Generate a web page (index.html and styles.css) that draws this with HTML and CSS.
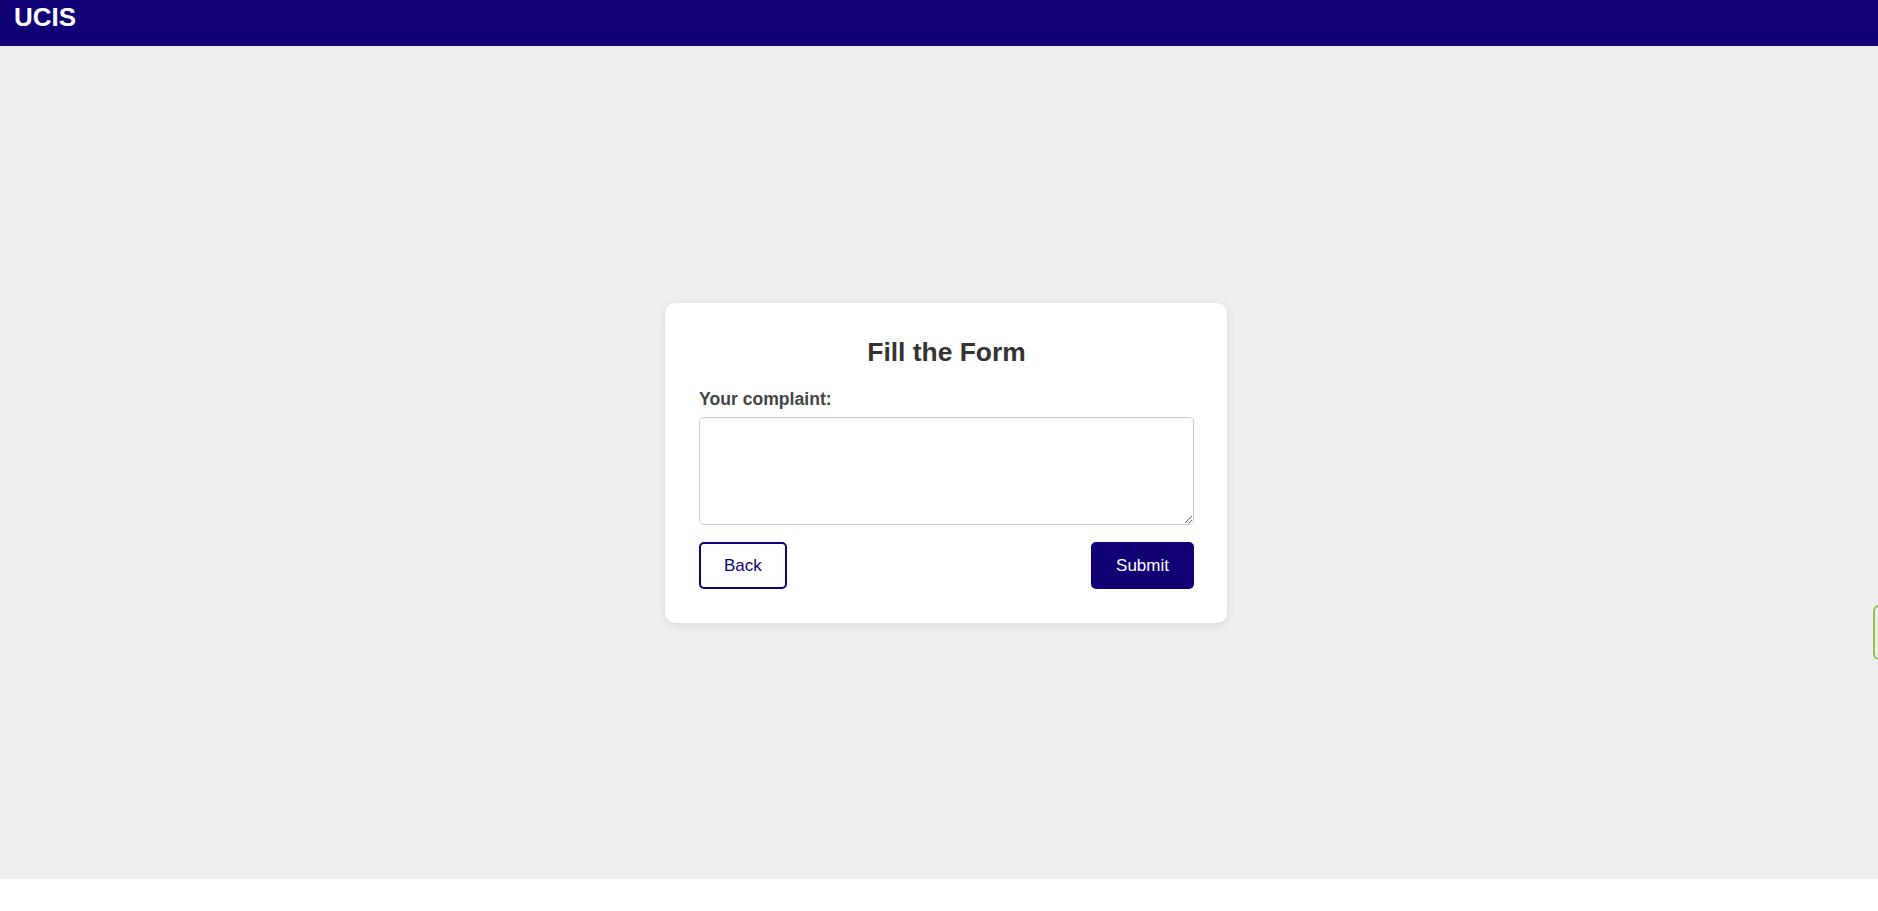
FILE: index.html
```html
<!DOCTYPE html>
<html lang="en">
<head>
<meta charset="utf-8">
<title>UCIS</title>
<link rel="stylesheet" href="styles.css">
</head>
<body>
<header class="topbar">
  <div class="brand">UCIS</div>
</header>
<main class="stage">
  <form class="card">
    <h2 class="card-title">Fill the Form</h2>
    <label class="field-label" for="complaint">Your complaint:</label>
    <textarea id="complaint" class="field-input"></textarea>
    <div class="actions">
      <button type="button" class="btn btn-outline">Back</button>
      <button type="submit" class="btn btn-solid">Submit</button>
    </div>
  </form>
</main>
<div class="side-tab"></div>
</body>
</html>
```
FILE: styles.css
```css
html, body {
  margin: 0;
  padding: 0;
}
body {
  font-family: "Liberation Sans", Arial, sans-serif;
  background: #ffffff;
  overflow-x: hidden;
  position: relative;
  min-height: 911px;
}
.topbar {
  height: 46px;
  background: #110075;
  box-sizing: border-box;
  padding: 2px 14px 0;
}
.brand {
  color: #ffffff;
  font-weight: bold;
  font-size: 26px;
  line-height: 30px;
}
.stage {
  height: 833px;
  background: #efefef;
  display: flex;
  align-items: center;
  justify-content: center;
  padding-left: 14px;
  box-sizing: border-box;
}
.card {
  width: 495px;
  background: #ffffff;
  border-radius: 10px;
  padding: 34px 33px 34px 34px;
  box-shadow: 0 2px 10px rgba(0, 0, 0, 0.1);
}
.card-title {
  margin: 0 0 22px;
  text-align: center;
  font-size: 26.4px;
  line-height: 30px;
  font-weight: bold;
  color: #333333;
}
.field-label {
  display: block;
  font-size: 17.6px;
  line-height: 20px;
  font-weight: bold;
  color: #444444;
  margin-bottom: 8px;
}
.field-input {
  display: block;
  width: 100%;
  height: 108px;
  box-sizing: border-box;
  border: 1px solid #cccccc;
  border-radius: 5px;
  padding: 8px;
  font-family: "Liberation Sans", Arial, sans-serif;
  font-size: 16px;
  background: #ffffff;
  margin: 0;
}
.actions {
  display: flex;
  justify-content: space-between;
  margin-top: 17px;
}
.btn {
  font-family: "Liberation Sans", Arial, sans-serif;
  font-size: 17px;
  line-height: 19px;
  padding: 12px 23px;
  border: 2px solid #110075;
  border-radius: 5px;
  cursor: pointer;
  margin: 0;
}
.btn-outline {
  background: #ffffff;
  color: #110075;
}
.btn-solid {
  background: #110075;
  color: #ffffff;
  padding: 12px 23px;
}
.side-tab {
  position: absolute;
  left: 1873px;
  top: 605px;
  width: 40px;
  height: 51px;
  border: 2px solid #8cc63f;
  border-radius: 6px;
  background: #efefef;
}
```
